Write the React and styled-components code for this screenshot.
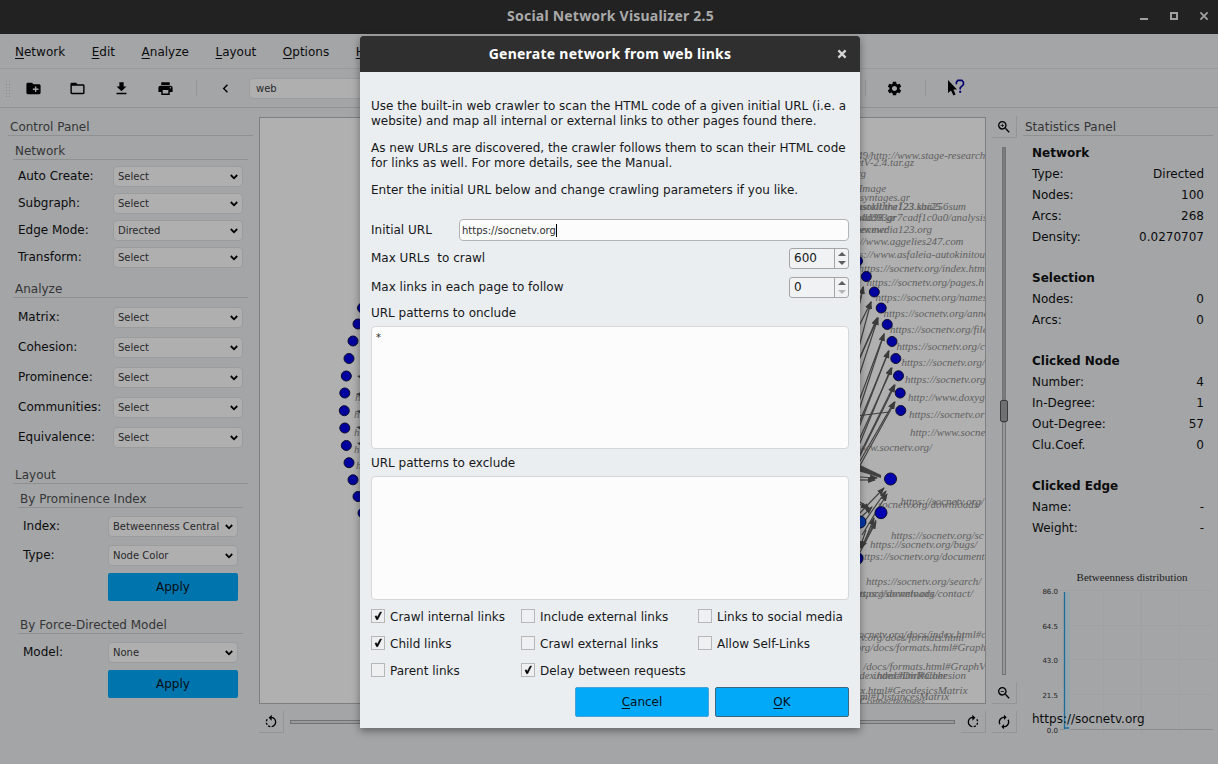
import React from "react";
import styled, { createGlobalStyle } from "styled-components";
import {
  MdCreateNewFolder,
  MdFolderOpen,
  MdFileDownload,
  MdPrint,
  MdChevronLeft,
  MdSettings,
  MdZoomIn,
  MdZoomOut,
  MdRotateLeft,
  MdRotateRight,
  MdAutorenew,
} from "react-icons/md";

const Global = createGlobalStyle`
  * { box-sizing: border-box; }
  body { margin: 0; background: #a4a5a7; }
`;

const Window = styled.div`
  position: relative;
  width: 1218px;
  height: 764px;
  overflow: hidden;
  display: flex;
  flex-direction: column;
  background: #a4a5a7;
  color: #0b0c0d;
  font: 12px/15px "DejaVu Sans", sans-serif;
  white-space: pre;
`;

const TitleBar = styled.header`
  display: grid;
  grid-template-columns: 1fr auto 1fr;
  align-items: center;
  height: 34px;
  padding: 0 8px 2px 11px;
  background: #222222;
  color: #a9a9a9;
  flex: none;
`;

const TitleText = styled.h1`
  margin: 0;
  grid-column: 2;
  font: bold 14px/20px "Noto Sans", sans-serif;
  letter-spacing: ${(p) => p.$spacing || "0"};
`;

const WindowControls = styled.div`
  display: flex;
  justify-content: flex-end;
  gap: 18px;
`;

const MenuBar = styled.nav`
  display: flex;
  align-items: center;
  gap: 26.6px;
  height: 35px;
  padding: 2px 0 0 15px;
  border-bottom: 1px solid #989a9c;
  flex: none;
`;

const Key = styled.span`
  text-decoration: underline;
  text-underline-offset: 2px;
  text-decoration-thickness: 1px;
`;

const Toolbar = styled.div`
  display: flex;
  align-items: center;
  height: 39px;
  padding-left: 5px;
  border-bottom: 1px solid #8f9193;
  flex: none;
`;

const Grip = styled.div`
  width: 7px;
  height: 17px;
  margin-right: 0;
  background-image: radial-gradient(circle, #86888a 0.7px, transparent 0.9px);
  background-size: 3px 3px;
`;

const ToolButton = styled.div`
  display: flex;
  align-items: center;
  justify-content: center;
  width: ${(p) => p.$w || 44}px;
  height: 32px;
  padding-right: 1px;
  font-size: 17px;
  color: #000;
`;

const Divider = styled.div`
  width: 1px;
  height: 16px;
  background: #939597;
`;

const Spacer = styled.div`
  width: ${(p) => p.$w}px;
`;

const Combo = styled.div`
  display: flex;
  align-items: center;
  justify-content: space-between;
  width: ${(p) => p.$w || 130}px;
  height: 21px;
  padding: 0 4px 0 ${(p) => p.$pad || 4}px;
  border: 1px solid #9b9c9e;
  border-radius: 4px;
  background: #afafb0;
  color: #29292a;
  font-size: 10px;
  overflow: hidden;

  svg {
    flex: none;
  }
`;

const Body = styled.main`
  display: flex;
  flex: 1;
`;

const ControlPanel = styled.aside`
  width: 259px;
  padding: 10px 6px 0 8px;
`;

const GroupTitle = styled.h2`
  height: 18px;
  margin: ${(p) => p.$top || 0}px ${(p) => p.$inset || 0}px 0 ${(p) => p.$inset || 0}px;
  padding-left: 2px;
  border-bottom: 1px solid #8f9092;
  color: #343536;
  font-size: 12px;
  line-height: 18px;
  font-weight: normal;
`;

const Fields = styled.div`
  margin: ${(p) => p.$top}px ${(p) => p.$right}px 0 ${(p) => p.$left}px;
`;

const Field = styled.div`
  display: flex;
  align-items: center;
  justify-content: space-between;
  height: ${(p) => p.$h}px;
  padding-top: ${(p) => (p.$h % 2 ? 0 : 1)}px;
`;

const ApplyButton = styled.button`
  display: block;
  width: 130px;
  height: 28px;
  margin: ${(p) => p.$top}px 0 0 auto;
  padding: 0;
  border: 0;
  border-radius: 2px;
  background: #0074ac;
  color: #060d14;
  font: 12px/15px "DejaVu Sans", sans-serif;
  padding-top: 1px;
`;

const CanvasColumn = styled.section`
  display: flex;
  flex-direction: column;
  width: 727px;
  padding-top: 9px;
`;

const Canvas = styled.div`
  height: 587px;
  border: 1px solid #7e7f81;
  background: #b0b0b0;
  overflow: hidden;

  svg {
    display: block;
  }
`;

const SliderRow = styled.div`
  display: flex;
  align-items: center;
  margin-top: 7px;
  height: 22px;
`;

const PanButton = styled.div`
  display: flex;
  align-items: center;
  justify-content: center;
  width: 25px;
  height: 22px;
  border-right: 1px solid #949597;
  border-bottom: 1px solid #949597;
  font-size: 16px;
  color: #000;
  flex: none;
`;

const HGroove = styled.div`
  flex: 1;
  height: 4px;
  margin: 0 6px;
  border: 1px solid #727375;
  background: #999a9c;
`;

const ZoomColumn = styled.div`
  display: flex;
  flex-direction: column;
  width: 32px;
  padding: 8px 0 0 6px;
`;

const VSlider = styled.div`
  display: flex;
  flex-direction: column;
  align-items: center;
  height: 528px;
  width: 24px;
  margin: 9px 0 7px;
`;

const VGroove = styled.div`
  width: 4px;
  height: ${(p) => p.$h}px;
  border: 1px solid #737476;
  background: ${(p) => (p.$filled ? "#7a7b7d" : "#97989a")};
`;

const VHandle = styled.div`
  width: 8px;
  height: 22px;
  border: 1px solid #3c3c3d;
  border-radius: 2px;
  background: #6f7072;
`;

const StatsPanel = styled.aside`
  position: relative;
  width: 200px;
  padding: 10px 0 0 5px;
`;

const StatsTitleWrap = styled.div`
  width: 190px;
`;

const StatsList = styled.div`
  padding: 7px 14px 0 9px;
`;

const StatsHeading = styled.h3`
  margin: ${(p) => p.$top}px 0 0;
  height: 21px;
  font-size: 12px;
  line-height: 20px;
`;

const Stat = styled.div`
  display: flex;
  justify-content: space-between;
  height: 21px;
  line-height: 21px;
`;

const Chart = styled.svg`
  display: block;
  margin: 22px 0 0 -5px;
`;

const HoverUrl = styled.div`
  position: absolute;
  left: 14px;
  top: 604px;
`;

const Dialog = styled.section`
  position: absolute;
  left: 360px;
  top: 36px;
  width: 500px;
  height: 692px;
  border-radius: 3px 3px 0 0;
  overflow: hidden;
  background: #ebeef1;
  color: #16181a;
`;

const DialogShadow = styled.div`
  position: absolute;
  left: 360px;
  top: 36px;
  width: 500px;
  height: 692px;
  box-shadow: 0 3px 8px rgba(0, 0, 0, 0.4);
`;

const DialogTitle = styled.header`
  display: grid;
  grid-template-columns: 1fr auto 1fr;
  align-items: center;
  justify-items: end;
  height: 36px;
  padding: 0 13px 0 13px;
  background: #2f2f2f;
  color: #ffffff;
`;

const DialogBody = styled.div`
  padding: 27px 11px 0;
`;

const Para = styled.p`
  margin: 0 0 12px;
`;

const FormRow = styled.div`
  display: flex;
  align-items: center;
  justify-content: space-between;
  height: ${(p) => p.$h || 21}px;
  margin-top: ${(p) => p.$top}px;
`;

const UrlInput = styled.div`
  display: flex;
  align-items: center;
  width: 390px;
  height: 22px;
  padding-left: 2px;
  border: 1px solid #b2b4b6;
  border-radius: 4px;
  background: #fcfcfc;
  color: #2d2e2f;
  font-size: 10px;
`;

const Caret = styled.span`
  width: 1px;
  height: 13px;
  background: #000;
`;

const Spin = styled.div`
  display: flex;
  width: 60px;
  height: 21px;
  border: 1px solid #a3a5a7;
  border-radius: 3px;
  background: #f0f2f4;
`;

const SpinValue = styled.span`
  flex: 1;
  padding-left: 4px;
  line-height: 19px;
`;

const SpinArrows = styled.span`
  display: flex;
  flex-direction: column;
  justify-content: center;
  align-items: center;
  gap: 5px;
  width: 14px;
  border-left: 1px solid #a3a5a7;
`;

const Arrow = styled.i`
  border: 4px solid transparent;
  border-top-width: ${(p) => (p.$up ? 0 : 4)}px;
  border-bottom-width: ${(p) => (p.$up ? 4 : 0)}px;
  border-${(p) => (p.$up ? "bottom" : "top")}-color: ${(p) => (p.$off ? "#b4b6b8" : "#5c5e60")};
`;

const AreaLabel = styled.div`
  height: 18px;
  margin: ${(p) => p.$top}px 0 4px;
  line-height: 18px;
`;

const PatternArea = styled.div`
  height: ${(p) => p.$h}px;
  padding: 4px 4px;
  border: 1px solid #d5d7d9;
  border-radius: 4px;
  background: #fcfcfc;
  color: #2d2e2f;
  font-size: 10px;
  line-height: 13px;
`;

const Checks = styled.div`
  display: grid;
  grid-template-columns: 150px 177px 1fr;
  grid-auto-rows: 27px;
  margin-top: 3px;
`;

const Check = styled.label`
  display: flex;
  align-items: flex-start;
  gap: 5px;
  line-height: 29px;
`;

const CheckBox = styled.span`
  display: flex;
  width: 14px;
  height: 14px;
  margin-top: 6px;
  border: 1px solid #b5b7b9;
  background: #eef0f2;
`;

const Actions = styled.div`
  display: flex;
  justify-content: flex-end;
  gap: 6px;
  margin-top: 3px;
`;

const ActionButton = styled.button`
  width: 134px;
  height: 30px;
  padding: 1px 0 0;
  border: 1px solid ${(p) => (p.$primary ? "#3c6780" : "#48a3d4")};
  border-radius: 2px;
  background: #03a9f9;
  color: #05101a;
  font: 12px/15px "DejaVu Sans", sans-serif;
`;

const Select = ({ value }) => (
  <Combo>
    {value}
    <svg width="8" height="6" viewBox="0 0 8 6">
      <path d="M.8 1 4 4.3 7.2 1" fill="none" stroke="#000" strokeWidth="1.8" />
    </svg>
  </Combo>
);

const CloseGlyph = ({ color }) => (
  <svg width="10" height="10" viewBox="0 0 10 10">
    <path d="M1.4 1.4 8.6 8.6M8.6 1.4 1.4 8.6" stroke={color} strokeWidth="2.2" />
  </svg>
);

const MENUS = ["Network", "Edit", "Analyze", "Layout", "Options", "Help"];

const NETWORK_FIELDS = [
  ["Auto Create:", "Select"],
  ["Subgraph:", "Select"],
  ["Edge Mode:", "Directed"],
  ["Transform:", "Select"],
];
const ANALYZE_FIELDS = ["Matrix:", "Cohesion:", "Prominence:", "Communities:", "Equivalence:"];

const STATS = [
  ["Network", [["Type:", "Directed"], ["Nodes:", "100"], ["Arcs:", "268"], ["Density:", "0.0270707"]]],
  ["Selection", [["Nodes:", "0"], ["Arcs:", "0"]]],
  ["Clicked Node", [["Number:", "4"], ["In-Degree:", "1"], ["Out-Degree:", "57"], ["Clu.Coef.", "0"]]],
  ["Clicked Edge", [["Name:", "-"], ["Weight:", "-"]]],
];

const NODES = [
  [362.5, 308], [358, 324], [353, 341], [349, 358.5], [346.3, 376], [344.8, 393], [344.3, 410.7],
  [344.8, 428], [346.3, 445.5], [349, 462.7], [353, 479.8], [358, 496.5], [363, 513],
  [857.5, 261], [866.3, 276.5], [874.3, 292], [881.2, 308], [887.2, 324.5], [892, 341.5],
  [895.8, 358.5], [898.5, 375.8], [900.2, 393], [900.8, 410.5],
];
const HUBS = [[890.5, 479, "#0000b0"], [881, 512.7, "#0000b0"], [860, 522, "#0038a8"], [857, 558.5, "#000090"]];

// [text, x, baseline, anchored at its end]
const LABELS = [
  ["49/", 871, 159, 1], ["http://www.stage-research", 870.5, 159],
  ["netV-2.4.tar.gz", 914, 166, 1], [".org", 866, 177, 1], ["Image", 886, 192, 1],
  ["syntages.gr", 910, 201, 1], ["-install.the123.sha256sum", 966, 210, 1],
  ["fusokithra123.kai25", 941, 210, 1], ["44dd93gr7cadf1c0a0/analysis", 987, 221, 1],
  ["kadd98.gr", 896, 221, 1], ["newmedia123.org", 932, 233, 1], ["ber.ewr", 888, 233, 1],
  ["//www.aggelies247.com", 963.5, 245, 1], ["ps://www.asfaleia-autokinitou", 985, 258, 1],
  ["https://socnetv.org/index.html", 858.5, 272], ["https://socnetv.org/pages.h", 866.5, 286],
  ["https://socnetv.org/names", 875.5, 301], ["https://socnetv.org/anne", 883.5, 317],
  ["https://socnetv.org/file", 890, 333], ["https://socnetv.org/c", 896.5, 350],
  ["https://socnetv.org/", 901.5, 366], ["https://socnetv.org", 905, 383],
  ["http://www.doxyg", 908, 401], ["https://socnetv.or", 909, 418],
  ["http://www.socne", 910, 436], ["www.socnetv.org/", 932, 451, 1],
  ["https://socnetv.org/", 900.5, 505], ["socnetv.org/downloads/", 981, 508, 1],
  ["https://socnetv.org/sc", 891, 539], ["https://socnetv.org/bugs/", 870, 548],
  ["https://socnetv.org/documenta", 858.5, 560], ["https://socnetv.org/search/", 866, 585],
  ["https://socnetv.org/contact/", 973, 597, 1], ["ttps.org/downloads", 934, 597, 1],
  ["socnetv.org/docs/index.html#c", 986, 638, 1], ["tv.org/docs/formats.html", 964, 641, 1],
  ["org/docs/formats.html#Graph", 986, 651, 1], ["/docs/formats.html#GraphVi", 988, 670, 1],
  ["index.html#Cohesion", 966, 679, 1], ["docs/index.html#DirRather", 947, 679, 1],
  ["ex.html#GeodesicsMatrix", 967.5, 694, 1], ["html#DistancesMatrix", 949, 700, 1],
  ["#Connectedness", 925, 705, 1],
  ["h", 355, 401], ["h", 354, 418], ["h", 354, 436], ["h", 354, 453], ["h", 356, 469],
];

const EDGES = [
  [856, 318, 863.5, 287], [854, 330, 863, 287], [852, 340, 871, 302], [856, 358, 871, 302],
  [852, 375, 878, 318], [856, 385, 878, 318], [858, 362, 877, 318],
  [850, 425, 884, 334], [857, 416, 884, 334], [852, 440, 889, 351], [858, 430, 888.5, 351],
  [852, 455, 892, 368], [857, 450, 891, 368], [852, 472, 895, 385], [858, 458, 894, 385],
  [852, 480, 895, 402], [856, 468, 894, 402],
  [860, 477, 877, 478], [860, 480, 875, 480],
  [858, 515, 884, 488], [860, 528, 886, 491], [862, 535, 887, 494],
  [850, 500, 868, 508], [860, 502, 870, 510], [858, 520, 872, 507],
  [858, 556, 876, 522], [862, 548, 874, 518], [866, 530, 860, 548], [876, 520, 861, 548],
];

function NetworkGraph() {
  return (
    <svg width="725" height="585" viewBox="260 118 725 585">
      <defs>
        <marker id="tip" markerUnits="userSpaceOnUse" markerWidth="9" markerHeight="6" refX="7" refY="3" orient="auto">
          <path d="M0 0 8 3 0 6Z" fill="#3c3c3c" />
        </marker>
      </defs>
      <g stroke="#424242" strokeWidth="1.2">
        {EDGES.map(([x1, y1, x2, y2], i) => (
          <line key={i} x1={x1} y1={y1} x2={x2} y2={y2} markerEnd="url(#tip)" />
        ))}
        <line x1="856" y1="416" x2="889" y2="412" />
      </g>
      <path d="M858 464 881 475 881 478 858 471Z" fill="#424242" />
      <path d="M357 376l4-1v4zM356 394l5-2v5zM356 411l5-1v4zM356 427l5-1v4zM357 443l4-1v4z" fill="#404040" />
      <g fontFamily="'Liberation Serif', serif" fontStyle="italic" fontSize="10.95" fill="#5f5f5f">
        {LABELS.map(([t, x, y, end], i) => (
          <text key={i} x={x} y={y} textAnchor={end ? "end" : "start"}>
            {t}
          </text>
        ))}
      </g>
      <g stroke="#0c0c2c" strokeWidth="1">
        {NODES.map(([x, y], i) => (
          <circle key={i} cx={x} cy={y} r="5" fill="#00009e" />
        ))}
        {HUBS.map(([x, y, fill], i) => (
          <circle key={i} cx={x} cy={y} r="6" fill={fill} />
        ))}
      </g>
    </svg>
  );
}

function DistributionChart() {
  const ticks = [["86.0", 591], ["64.5", 626], ["43.0", 660], ["21.5", 695], ["0.0", 730]];
  return (
    <Chart width="200" height="180" viewBox="1018 561 200 180">
      <g stroke="#9fa1a3" strokeWidth="1">
        {[1103, 1141, 1179].map((x) => (
          <line key={x} x1={x + 0.5} x2={x + 0.5} y1="591" y2="734" />
        ))}
        {ticks.slice(0, 4).map(([t, y]) => (
          <line key={t} x1="1060" x2="1213" y1={y - 0.5} y2={y - 0.5} />
        ))}
      </g>
      <path d="M1060 729.5H1213" stroke="#8b8d8f" />
      <rect x="1065" y="592" width="5" height="138" fill="#94a5b0" />
      <path d="M1064.5 592V729M1064 728H1069" stroke="#1f6c96" strokeWidth="1.3" fill="none" />
      <text x="1132" y="581" textAnchor="middle" fontFamily="'Liberation Serif', serif" fontSize="11" fill="#1a1a1a">
        Betweenness distribution
      </text>
      <g fontFamily="'DejaVu Sans', sans-serif" fontSize="7" fill="#222" textAnchor="end">
        {ticks.map(([t, y]) => (
          <text key={t} x="1058" y={y + 3}>
            {t}
          </text>
        ))}
      </g>
    </Chart>
  );
}

const CheckItem = ({ label, on }) => (
  <Check>
    <CheckBox>
      {on && (
        <svg width="12" height="12" viewBox="0 0 12 12">
          <path d="M3 6.2 4.4 5.8 5.2 7.6 8 2.2 9.6 2 5.8 9.6 4.6 9.8Z" fill="#000" stroke="#000" strokeWidth=".5" />
        </svg>
      )}
    </CheckBox>
    {label}
  </Check>
);

const SpinBox = ({ value, min }) => (
  <Spin>
    <SpinValue>{value}</SpinValue>
    <SpinArrows>
      <Arrow $up />
      <Arrow $off={min} />
    </SpinArrows>
  </Spin>
);

export default function App() {
  return (
    <Window>
      <Global />
      <TitleBar>
        <TitleText $spacing="0.22px">Social Network Visualizer 2.5</TitleText>
        <WindowControls>
          <svg width="12" height="12" viewBox="0 0 12 12">
            <path d="M2 9H10" stroke="#a0a0a0" strokeWidth="2" />
          </svg>
          <svg width="12" height="12" viewBox="0 0 12 12">
            <rect x="3" y="3" width="6" height="6" fill="none" stroke="#a0a0a0" strokeWidth="2" />
          </svg>
          <svg width="12" height="12" viewBox="0 0 12 12">
            <path d="M2.4 2.4 9.6 9.6M9.6 2.4 2.4 9.6" stroke="#a0a0a0" strokeWidth="1.8" />
          </svg>
        </WindowControls>
      </TitleBar>

      <MenuBar>
        {MENUS.map((m) => (
          <span key={m}>
            <Key>{m[0]}</Key>
            {m.slice(1)}
          </span>
        ))}
      </MenuBar>

      <Toolbar>
        <Grip />
        <ToolButton><MdCreateNewFolder /></ToolButton>
        <ToolButton><MdFolderOpen /></ToolButton>
        <ToolButton><MdFileDownload /></ToolButton>
        <ToolButton><MdPrint /></ToolButton>
        <Spacer $w={8} />
        <Divider />
        <Spacer $w={7} />
        <ToolButton><MdChevronLeft /></ToolButton>
        <Spacer $w={1} />
        <Combo $w={160} $pad={6}>web</Combo>
        <Spacer $w={456} />
        <Divider />
        <Spacer $w={7} />
        <ToolButton><MdSettings /></ToolButton>
        <Spacer $w={8} />
        <Divider />
        <Spacer $w={8} />
        <ToolButton>
          <svg width="18" height="18" viewBox="0 0 18 18">
            <path d="M1 1V14L4 11.4 6.4 16.4 8.6 15.4 6.4 10.6H10Z" fill="#000" />
            <path d="M9.4 5.2V3.2L10.8 1.4H14.8L16.4 3V5.6L13.2 8.8V10.4" fill="none" stroke="#00006e" strokeWidth="1.6" />
            <path d="M12.2 11.8H14.2V13.8H12.2Z" fill="#00006e" />
          </svg>
        </ToolButton>
      </Toolbar>

      <Body>
        <ControlPanel>
          <GroupTitle>Control Panel</GroupTitle>
          <GroupTitle $top={6} $inset={5}>Network</GroupTitle>
          <Fields $top={3} $left={10} $right={10}>
            {NETWORK_FIELDS.map(([label, value]) => (
              <Field key={label} $h={27}>
                {label}
                <Select value={value} />
              </Field>
            ))}
          </Fields>
          <GroupTitle $top={9} $inset={5}>Analyze</GroupTitle>
          <Fields $top={4} $left={10} $right={10}>
            {ANALYZE_FIELDS.map((label) => (
              <Field key={label} $h={30}>
                {label}
                <Select value="Select" />
              </Field>
            ))}
          </Fields>
          <GroupTitle $top={14} $inset={5}>Layout</GroupTitle>
          <GroupTitle $top={6} $inset={10}>By Prominence Index</GroupTitle>
          <Fields $top={4} $left={15} $right={15}>
            <Field $h={29}>
              Index:
              <Select value="Betweenness Central" />
            </Field>
            <Field $h={29}>
              Type:
              <Select value="Node Color" />
            </Field>
            <ApplyButton $top={3}>Apply</ApplyButton>
          </Fields>
          <GroupTitle $top={15} $inset={10}>By Force-Directed Model</GroupTitle>
          <Fields $top={4} $left={15} $right={15}>
            <Field $h={28}>
              Model:
              <Select value="None" />
            </Field>
            <ApplyButton $top={4}>Apply</ApplyButton>
          </Fields>
        </ControlPanel>

        <CanvasColumn>
          <Canvas>
            <NetworkGraph />
          </Canvas>
          <SliderRow>
            <PanButton><MdRotateLeft /></PanButton>
            <HGroove />
            <PanButton><MdRotateRight /></PanButton>
          </SliderRow>
        </CanvasColumn>

        <ZoomColumn>
          <PanButton><MdZoomIn /></PanButton>
          <VSlider>
            <VGroove $h={253} $filled />
            <VHandle />
            <VGroove $h={253} />
          </VSlider>
          <PanButton><MdZoomOut /></PanButton>
          <SliderRow>
            <PanButton><MdAutorenew /></PanButton>
          </SliderRow>
        </ZoomColumn>

        <StatsPanel>
          <StatsTitleWrap>
            <GroupTitle>Statistics Panel</GroupTitle>
          </StatsTitleWrap>
          <StatsList>
            {STATS.map(([heading, rows], i) => (
              <React.Fragment key={heading}>
                <StatsHeading $top={i ? 20 : 0}>{heading}</StatsHeading>
                {rows.map(([k, v]) => (
                  <Stat key={k}>
                    <span>{k}</span>
                    <span>{v}</span>
                  </Stat>
                ))}
              </React.Fragment>
            ))}
          </StatsList>
          <DistributionChart />
          <HoverUrl>https://socnetv.org</HoverUrl>
        </StatsPanel>
      </Body>

      <DialogShadow />
      <Dialog>
        <DialogTitle>
          <TitleText $spacing="0.26px">Generate network from web links</TitleText>
          <CloseGlyph color="#d6d6d6" />
        </DialogTitle>
        <DialogBody>
          <Para>{"Use the built-in web crawler to scan the HTML code of a given initial URL (i.e. a\nwebsite) and map all internal or external links to other pages found there."}</Para>
          <Para>{"As new URLs are discovered, the crawler follows them to scan their HTML code\nfor links as well. For more details, see the Manual."}</Para>
          <Para>Enter the initial URL below and change crawling parameters if you like.</Para>
          <FormRow $top={21} $h={22}>
            Initial URL
            <UrlInput>
              https://socnetv.org
              <Caret />
            </UrlInput>
          </FormRow>
          <FormRow $top={7}>
            {"Max URLs  to crawl"}
            <SpinBox value="600" />
          </FormRow>
          <FormRow $top={8}>
            Max links in each page to follow
            <SpinBox value="0" min />
          </FormRow>
          <AreaLabel $top={6}>URL patterns to onclude</AreaLabel>
          <PatternArea $h={123}>*</PatternArea>
          <AreaLabel $top={5}>URL patterns to exclude</AreaLabel>
          <PatternArea $h={124} />
          <Checks>
            <CheckItem label="Crawl internal links" on />
            <CheckItem label="Include external links" />
            <CheckItem label="Links to social media" />
            <CheckItem label="Child links" on />
            <CheckItem label="Crawl external links" />
            <CheckItem label="Allow Self-Links" />
            <CheckItem label="Parent links" />
            <CheckItem label="Delay between requests" on />
          </Checks>
          <Actions>
            <ActionButton>
              <Key>C</Key>ancel
            </ActionButton>
            <ActionButton $primary>
              <Key>O</Key>K
            </ActionButton>
          </Actions>
        </DialogBody>
      </Dialog>
    </Window>
  );
}
